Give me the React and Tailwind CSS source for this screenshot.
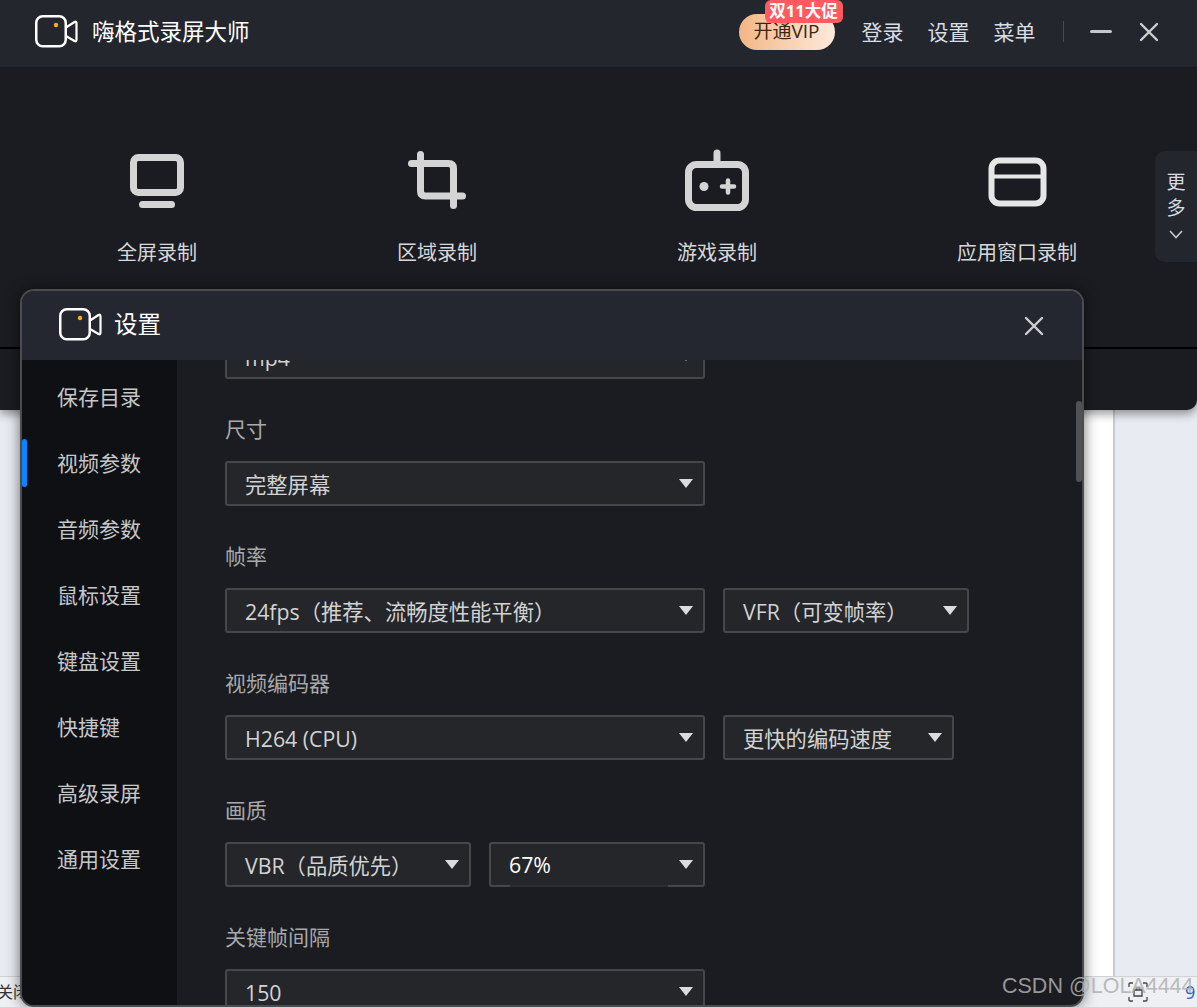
import React from 'react';

const fontStack = "font-['Open_Sans','Noto_Sans_CJK_SC',sans-serif]";

const LogoIcon = () => (
  <svg width="44" height="33" viewBox="0 0 44 33" fill="none">
    <rect x="1.25" y="1.25" width="29.5" height="30" rx="6.5" stroke="white" strokeWidth="2.5" />
    <circle cx="21" cy="10" r="2.2" fill="#f9ae16" />
    <path d="M31 12.5 L39.5 7 Q41.5 6 41.5 8.5 V24.5 Q41.5 27 39.5 26 L31 21" stroke="white" strokeWidth="2.2" strokeLinejoin="round" />
  </svg>
);

const CloseIcon = ({ size = 20, color = '#cfcfcf' }) => (
  <svg width={size} height={size} viewBox="0 0 20 20" fill="none">
    <path d="M2 2 L18 18 M18 2 L2 18" stroke={color} strokeWidth="2.4" strokeLinecap="round" />
  </svg>
);

const ScreenIcon = () => (
  <svg width="62" height="62" viewBox="0 0 62 62" fill="none">
    <rect x="7.5" y="8.5" width="47" height="35" rx="5" stroke="#d4d4d4" strokeWidth="7" />
    <rect x="13" y="52" width="36" height="7" rx="3.5" fill="#d4d4d4" />
  </svg>
);

const CropIcon = () => (
  <svg width="62" height="62" viewBox="0 0 62 62" fill="none">
    <path d="M14.5 5.5 V42 Q14.5 47 19.5 47 H56.5" stroke="#d4d4d4" strokeWidth="7" strokeLinecap="round" />
    <path d="M5.5 14.5 H42.5 Q47.5 14.5 47.5 19.5 V56.5" stroke="#d4d4d4" strokeWidth="7" strokeLinecap="round" />
  </svg>
);

const GameIcon = () => (
  <svg width="66" height="62" viewBox="0 0 66 62" fill="none">
    <rect x="4.5" y="15.5" width="57" height="43" rx="8" stroke="#d4d4d4" strokeWidth="7" />
    <path d="M33 4 V14" stroke="#d4d4d4" strokeWidth="7" strokeLinecap="round" />
    <circle cx="20" cy="37.5" r="4.5" fill="#d4d4d4" />
    <path d="M38 37.5 H50 M44 31.5 V43.5" stroke="#d4d4d4" strokeWidth="4.5" strokeLinecap="round" />
  </svg>
);

const WindowIcon = () => (
  <svg width="62" height="62" viewBox="0 0 62 62" fill="none">
    <rect x="5.5" y="11.5" width="52" height="43" rx="8" stroke="#e6e6e6" strokeWidth="6" />
    <path d="M5 27.5 H58" stroke="#e6e6e6" strokeWidth="4" />
  </svg>
);

const modes = [
  { label: '全屏录制', icon: <ScreenIcon /> },
  { label: '区域录制', icon: <CropIcon /> },
  { label: '游戏录制', icon: <GameIcon /> },
  { label: '应用窗口录制', icon: <WindowIcon /> },
];

const menuItems = ['保存目录', '视频参数', '音频参数', '鼠标设置', '键盘设置', '快捷键', '高级录屏', '通用设置'];

const Select = ({ width, children, bright }) => (
  <div className={`relative flex h-[45px] shrink-0 items-center justify-between rounded-[3px] border-2 border-[#45474b] bg-[#24262a] pl-[18px] pr-[10px] text-[21.3px] ${bright ? 'text-white' : 'text-[#d2d3d4]'} ${width}`}>
    <span className={`whitespace-nowrap leading-[28px] ${bright ? '' : 'pt-[2px]'}`}>{children}</span>
    <span className="h-0 w-0 border-x-[7px] border-t-[9px] border-x-transparent border-t-[#dcdcdc]" />
    {bright && <span className="absolute -bottom-[2px] left-[19px] h-[2px] w-[158px] bg-[#2c2d30]" />}
  </div>
);

const Field = ({ label, children }) => (
  <div className="mt-[36px]">
    <div className="mb-[18px] h-[28px] text-[21px] leading-[28px] text-[#a8a9aa]">{label}</div>
    <div className="flex gap-[18px]">{children}</div>
  </div>
);

const SettingsDialog = () => (
  <div className="absolute left-[20px] top-[289px] flex h-[718px] w-[1064px] flex-col overflow-hidden rounded-[14px] border-2 border-[#4a4c50] bg-[#1b1c21] shadow-[0_0_14px_rgba(0,0,0,0.55)]">
    <div className="flex h-[69px] shrink-0 items-center justify-between bg-[#24272f] pl-[37px] pr-[38px]">
      <div className="-mt-[3px] flex items-center gap-[11px]">
        <LogoIcon />
        <span className="text-[23.5px] leading-[32px] text-white">设置</span>
      </div>
      <CloseIcon />
    </div>
    <div className="relative flex min-h-0 flex-1">
      <div className="w-[155px] shrink-0 bg-[#0f1014] pt-[4px]">
        {menuItems.map((item, i) => (
          <div key={item} className="relative flex h-[66px] items-center pl-[35px] pt-[2px] text-[21px] text-[#c6c7c8]">
            {i === 1 && <span className="absolute left-0 top-[9px] h-[48px] w-[5px] rounded-[3px] bg-[#0a84ff]" />}
            {item}
          </div>
        ))}
      </div>
      <div className="min-w-0 flex-1 overflow-hidden pl-[48px]">
        <div className="-mt-[26px]">
          <Select width="w-[480px]">mp4</Select>
        </div>
        <Field label="尺寸">
          <Select width="w-[480px]">完整屏幕</Select>
        </Field>
        <Field label="帧率">
          <Select width="w-[480px]">24fps（推荐、流畅度性能平衡）</Select>
          <Select width="w-[246px]">VFR（可变帧率）</Select>
        </Field>
        <Field label="视频编码器">
          <Select width="w-[480px]">H264 (CPU)</Select>
          <Select width="w-[231px]">更快的编码速度</Select>
        </Field>
        <Field label="画质">
          <Select width="w-[246px]">VBR（品质优先）</Select>
          <Select width="w-[216px]" bright>67%</Select>
        </Field>
        <Field label="关键帧间隔">
          <Select width="w-[480px]">150</Select>
        </Field>
      </div>
      <div className="absolute right-0 top-[41px] h-[81px] w-[6px] rounded-[3px] bg-[#505154]" />
    </div>
  </div>
);

const AppWindow = () => (
  <div className="absolute inset-x-0 top-0 flex h-[410px] flex-col rounded-br-[10px] bg-[#1b1c21] shadow-[0_4px_10px_rgba(0,0,0,0.4)]">
    <div className="flex h-[67px] shrink-0 items-center bg-[#24262e] pb-[4px] pl-[35px]">
      <LogoIcon />
      <span className="ml-[13px] text-[22.5px] text-white">嗨格式录屏大师</span>
      <div className="relative ml-[489px] flex h-[36px] w-[96px] items-center justify-center rounded-full bg-gradient-to-r from-[#f3b685] to-[#fdeadb] text-[19px] text-[#3c2616]">
        开通VIP
        <span className="absolute -top-[14px] left-[26px] flex h-[23px] w-[78px] items-center justify-center rounded-[6px] bg-[#ff5a5f] text-[16.5px] font-bold leading-none text-white">双11大促</span>
      </div>
      <div className="ml-[27px] flex gap-[24px] pt-[2px] text-[21px] text-[#d8dde3]">
        <span>登录</span>
        <span>设置</span>
        <span>菜单</span>
      </div>
      <span className="ml-[27px] h-[21px] w-[1px] bg-[#4a4b50]" />
      <span className="ml-[26px] h-[3px] w-[22px] rounded-[2px] bg-[#c8c8c8]" />
      <span className="ml-[27px]"><CloseIcon /></span>
    </div>
    <div className="grid h-[280px] shrink-0 grid-cols-[280px_280px_280px_320px] pl-[17px] pt-[82px]">
      {modes.map((mode) => (
        <div key={mode.label} className="flex flex-col items-center">
          <div className="flex h-[62px] items-center justify-center">{mode.icon}</div>
          <div className="mt-[27px] text-[20px] leading-[30px] text-[#d6d8da]">{mode.label}</div>
        </div>
      ))}
    </div>
    <div className="h-[2px] shrink-0 bg-black" />
    <div className="absolute right-0 top-[151px] flex h-[111px] w-[42px] flex-col items-center rounded-l-[10px] bg-[#24262e] pt-[18px] text-[19px] leading-[26px] text-[#d8dde3]">
      <span>更</span>
      <span>多</span>
      <svg className="mt-[9px]" width="14" height="9" viewBox="0 0 14 9" fill="none">
        <path d="M1 1 L7 7.5 L13 1" stroke="#c8c8c8" strokeWidth="1.6" />
      </svg>
    </div>
  </div>
);

export default function App() {
  return (
    <div className={`relative flex h-[1007px] w-[1197px] flex-col overflow-hidden bg-[#e8ebf1] ${fontStack}`}>
      <div className="flex min-h-0 flex-1">
        <div className="w-[60px] shrink-0" />
        <div className="flex-1 border-r-2 border-[#c9cbce] bg-white" />
        <div className="w-[82px] shrink-0" />
      </div>
      <div className="flex h-[31px] shrink-0 items-center justify-between overflow-hidden border-t border-[#d0d2d6] bg-[#eef0f4] pr-[2px]">
        <span className="-ml-[3px] text-[16px] text-[#333]">关闭</span>
        <div className="flex items-center gap-[37px]">
          <svg width="20" height="20" viewBox="0 0 20 20" fill="none" stroke="#444" strokeWidth="1.3">
            <path d="M1 5 V2 Q1 1 2 1 H5 M15 1 H18 Q19 1 19 2 V5 M19 15 V18 Q19 19 18 19 H15 M5 19 H2 Q1 19 1 18 V15" />
            <path d="M6 8 H14 V14 H6 Z M8.5 8 V5.5 H11.5 V8" />
          </svg>
          <span className="w-[10px] text-[18px] text-[#2563c9]">9</span>
        </div>
      </div>
      <AppWindow />
      <SettingsDialog />
      <div className="absolute left-[1002px] top-[972px] whitespace-nowrap font-['Liberation_Sans',sans-serif] text-[21.5px] leading-[28px] text-[rgba(175,175,175,0.85)]">
        CSDN @LOLA4444
      </div>
    </div>
  );
}
